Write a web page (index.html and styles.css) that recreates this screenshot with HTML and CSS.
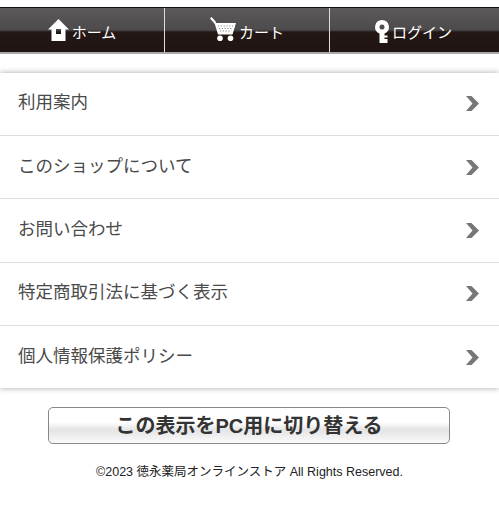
FILE: index.html
```html
<!DOCTYPE html>
<html lang="ja">
<head>
<meta charset="utf-8">
<title>徳永薬局オンラインストア</title>
<link rel="stylesheet" href="styles.css">
</head>
<body>
<nav class="tabs">
  <a class="tab tab-home"><svg class="ico" width="21" height="22" viewBox="0 0 21 22"><path fill="#fff" fill-rule="evenodd" d="M10.5 0 L21 10.5 H17.5 V22 H3.5 V10.5 H0 Z M8 10 V15 H13 V10 Z"/></svg><span>ホーム</span></a>
  <a class="tab tab-cart"><svg class="ico" width="26" height="24" viewBox="0 0 26 24"><path fill="none" stroke="#fff" stroke-width="2.2" d="M0.8 0.8 L5.5 6"/><path fill="#fff" d="M4.5 6 H26 L22.5 17.5 H8 Z"/><path stroke="#777" stroke-width="0.9" fill="none" stroke-dasharray="1.2 1.6" d="M8 9 H23 M9 11.5 H22.5 M10 14 H21.5"/><circle cx="10" cy="21.2" r="2.8" fill="#fff"/><circle cx="20.5" cy="21.2" r="2.8" fill="#fff"/></svg><span>カート</span></a>
  <a class="tab tab-login"><svg class="ico" width="14" height="23" viewBox="0 0 14 23"><path fill="#fff" fill-rule="evenodd" d="M7 0 A7 7 0 0 1 9.5 13.5 V15.5 H12.5 V17.5 H9.5 V19 H12.5 V23 H4.5 V13.5 A7 7 0 0 1 7 0 Z M7 4.5 A2.5 2.5 0 1 0 7 9.5 A2.5 2.5 0 1 0 7 4.5 Z"/></svg><span>ログイン</span></a>
</nav>
<ul class="menu">
  <li class="item"><span class="label">利用案内</span><svg class="chev" width="13" height="15" viewBox="0 0 13 15"><path fill="#777" d="M0 0 H5.5 L13 7.5 L5.5 15 H0 L6.5 7.5 Z"/></svg></li>
  <li class="item"><span class="label">このショップについて</span><svg class="chev" width="13" height="15" viewBox="0 0 13 15"><path fill="#777" d="M0 0 H5.5 L13 7.5 L5.5 15 H0 L6.5 7.5 Z"/></svg></li>
  <li class="item"><span class="label">お問い合わせ</span><svg class="chev" width="13" height="15" viewBox="0 0 13 15"><path fill="#777" d="M0 0 H5.5 L13 7.5 L5.5 15 H0 L6.5 7.5 Z"/></svg></li>
  <li class="item"><span class="label">特定商取引法に基づく表示</span><svg class="chev" width="13" height="15" viewBox="0 0 13 15"><path fill="#777" d="M0 0 H5.5 L13 7.5 L5.5 15 H0 L6.5 7.5 Z"/></svg></li>
  <li class="item"><span class="label">個人情報保護ポリシー</span><svg class="chev" width="13" height="15" viewBox="0 0 13 15"><path fill="#777" d="M0 0 H5.5 L13 7.5 L5.5 15 H0 L6.5 7.5 Z"/></svg></li>
</ul>
<div class="switch-wrap"><a class="switch">この表示をPC用に切り替える</a></div>
<p class="copy">©2023 徳永薬局オンラインストア All Rights Reserved.</p>
</body>
</html>
```
FILE: styles.css
```css
* { box-sizing: border-box; }
html, body { margin: 0; padding: 0; background: #fff; }
body { font-family: "Liberation Sans", "Noto Sans CJK JP", sans-serif; height: 521px; overflow: hidden; }
.tabs {
  display: flex;
  margin-top: 7px;
  height: 47px;
  border-top: 1px solid #111;
  border-bottom: 2px solid #aaa;
  background: linear-gradient(#5c5a5b 0, #4c4a4b 22px, #231815 24px, #1f1411 100%);
}
.tab {
  display: flex;
  align-items: center;
  justify-content: center;
  color: #fff;
  font-size: 15px;
  padding-top: 2px;
  gap: 3px;
  border-right: 1px solid #ddd;
}
.tab-home { width: 165px; }
.tab-cart { width: 165px; }
.tab-login { flex: 1; border-right: 0; padding-right: 2px; }
.ico { flex: none; }
.tab-home .ico { margin-top: -2px; }
.tab-cart .ico { margin-top: -4px; }
.tab-login .ico { margin-top: 0; }
.menu {
  list-style: none;
  margin: 18.6px 0 0;
  padding: 0;
  box-shadow: 0 0 6px rgba(0,0,0,.35);
  background: #fff;
}
.item {
  display: flex;
  align-items: center;
  justify-content: space-between;
  height: 63.4px;
  padding: 0 20px 0 18px;
  font-size: 17.5px;
  color: #4a4a4a;
  border-bottom: 1px solid #ddd;
}
.item:last-child { border-bottom: 0; height: 62px; }
.label { margin-bottom: 6px; }
.chev { flex: none; }
.switch-wrap { display: flex; justify-content: center; margin-top: 19px; padding-right: 1px; }
.switch {
  width: 402px;
  height: 37px;
  display: flex;
  align-items: center;
  justify-content: center;
  padding-bottom: 3px;
  border: 1px solid #888;
  border-radius: 5px;
  background: linear-gradient(#fff 0, #fff 40%, #e4e4e4 62%, #fafafa 100%);
  color: #333;
  font-size: 20px;
  font-weight: bold;
}
.copy {
  margin: 17px 0 0;
  text-align: center;
  font-size: 12.5px;
  color: #222;
}
```
